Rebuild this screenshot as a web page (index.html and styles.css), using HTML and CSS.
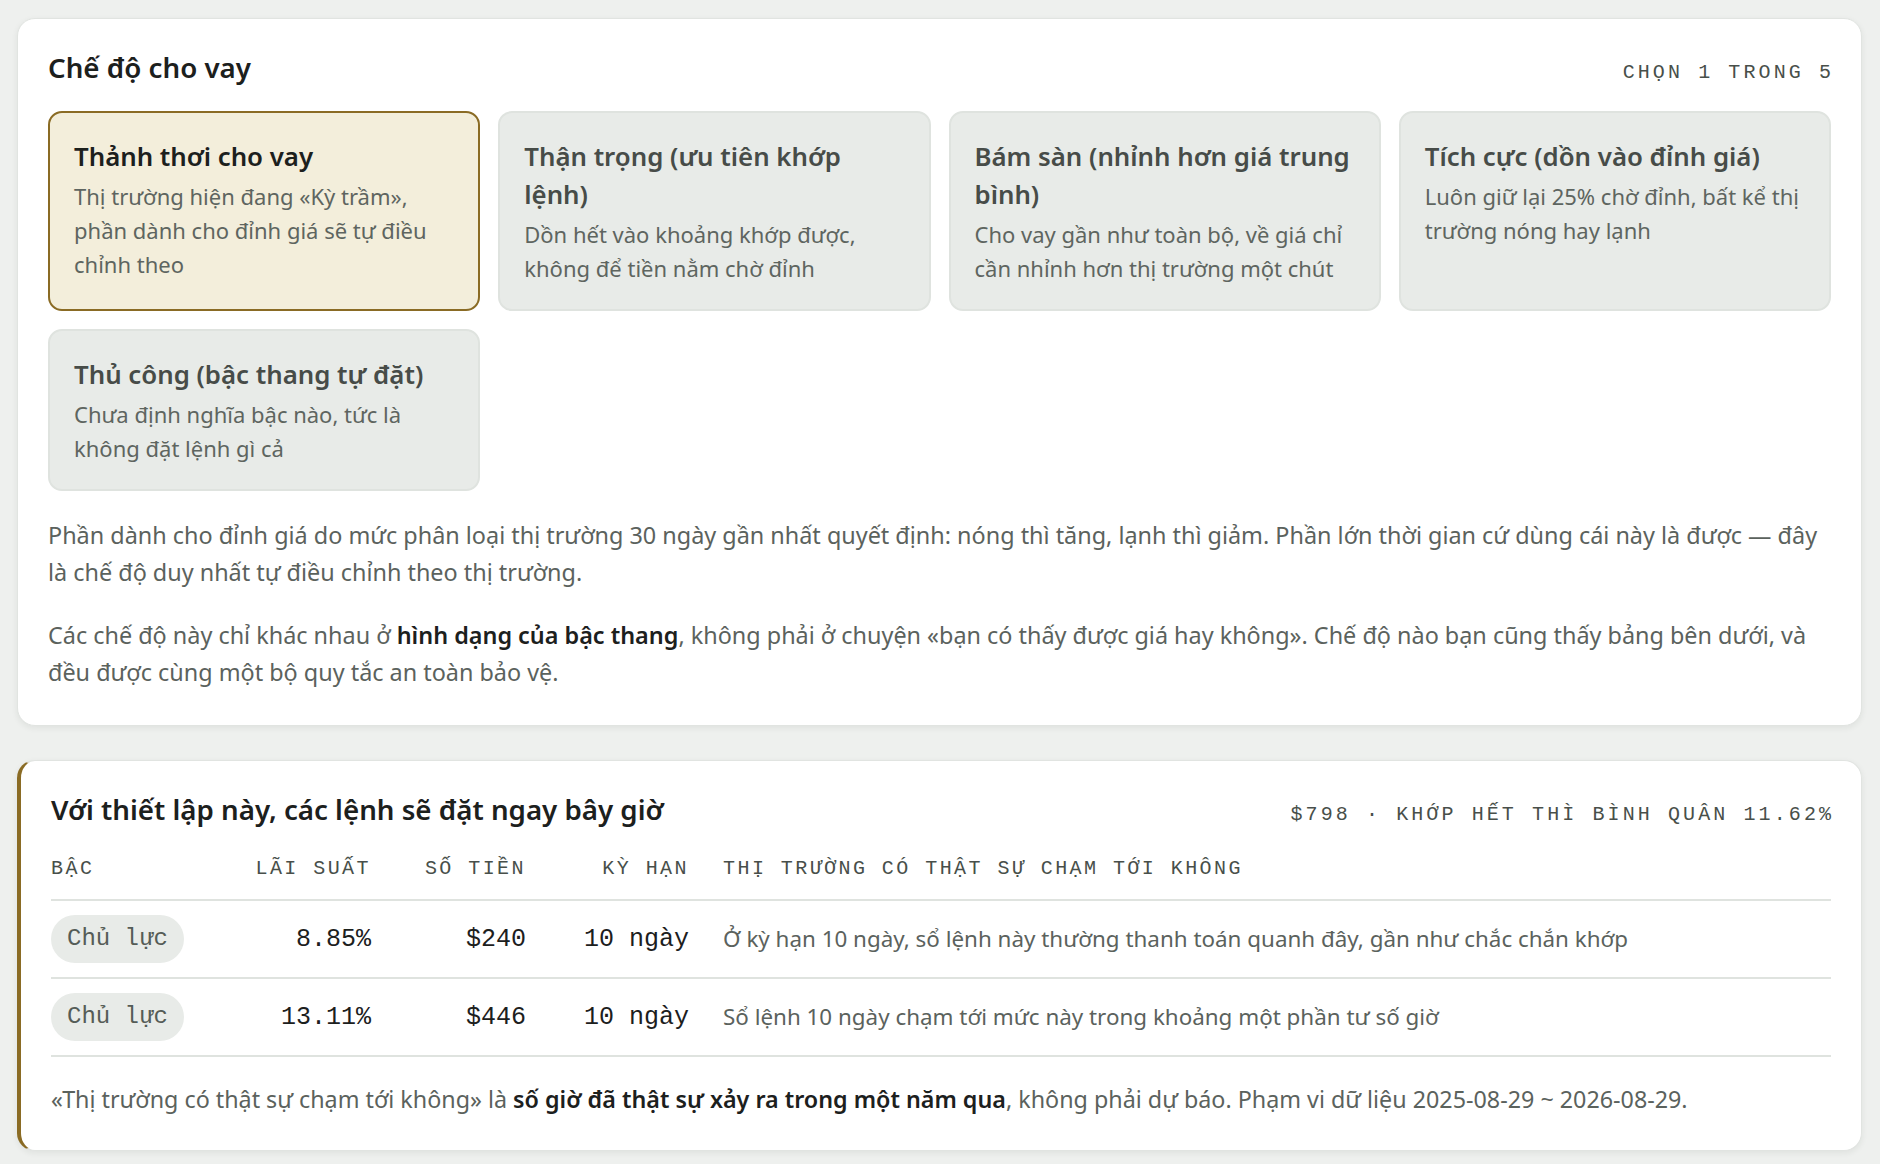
FILE: index.html
```html
<!DOCTYPE html>
<html lang="vi">
<head>
    <meta charset="UTF-8">
    <meta name="viewport" content="width=device-width, initial-scale=1.0">
    <title>Chế độ cho vay</title>
    <link rel="stylesheet" href="styles.css">
</head>
<body>
    <main class="page">
        <!-- Chọn chế độ -->
        <section class="panel">
            <header class="panel-head">
                <h2 class="panel-title">Chế độ cho vay</h2>
                <span class="eyebrow">CHỌN 1 TRONG 5</span>
            </header>

            <div class="modes">
                <div class="mode is-active">
                    <h3 class="mode-title">Thảnh thơi cho vay</h3>
                    <p class="mode-desc">Thị trường hiện đang «Kỳ trầm», phần dành cho đỉnh giá sẽ tự điều chỉnh theo</p>
                </div>
                <div class="mode">
                    <h3 class="mode-title">Thận trọng (ưu tiên khớp lệnh)</h3>
                    <p class="mode-desc">Dồn hết vào khoảng khớp được, không để tiền nằm chờ đỉnh</p>
                </div>
                <div class="mode">
                    <h3 class="mode-title">Bám sàn (nhỉnh hơn giá trung bình)</h3>
                    <p class="mode-desc">Cho vay gần như toàn bộ, về giá chỉ cần nhỉnh hơn thị trường một chút</p>
                </div>
                <div class="mode">
                    <h3 class="mode-title">Tích cực (dồn vào đỉnh giá)</h3>
                    <p class="mode-desc">Luôn giữ lại 25% chờ đỉnh, bất kể thị trường nóng hay lạnh</p>
                </div>
                <div class="mode">
                    <h3 class="mode-title">Thủ công (bậc thang tự đặt)</h3>
                    <p class="mode-desc">Chưa định nghĩa bậc nào, tức là không đặt lệnh gì cả</p>
                </div>
            </div>

            <p class="note">Phần dành cho đỉnh giá do mức phân loại thị trường 30 ngày gần nhất quyết định: nóng thì tăng, lạnh thì giảm. Phần lớn thời gian cứ dùng cái này là được — đây là chế độ duy nhất tự điều chỉnh theo thị trường.</p>
            <p class="note">Các chế độ này chỉ khác nhau ở <strong>hình dạng của bậc thang</strong>, không phải ở chuyện «bạn có thấy được giá hay không». Chế độ nào bạn cũng thấy bảng bên dưới, và đều được cùng một bộ quy tắc an toàn bảo vệ.</p>
        </section>

        <!-- Xem trước các lệnh -->
        <section class="panel panel-preview">
            <header class="panel-head">
                <h2 class="panel-title">Với thiết lập này, các lệnh sẽ đặt ngay bây giờ</h2>
                <span class="eyebrow">$798 · KHỚP HẾT THÌ BÌNH QUÂN 11.62%</span>
            </header>

            <div class="ladder">
                <div class="ladder-row ladder-head">
                    <span>BẬC</span>
                    <span class="right">LÃI SUẤT</span>
                    <span class="right">SỐ TIỀN</span>
                    <span class="right">KỲ HẠN</span>
                    <span>THỊ TRƯỜNG CÓ THẬT SỰ CHẠM TỚI KHÔNG</span>
                </div>
                <div class="ladder-row">
                    <span class="tier">Chủ lực</span>
                    <span class="num">8.85%</span>
                    <span class="num">$240</span>
                    <span class="num">10 ngày</span>
                    <span class="hit">Ở kỳ hạn 10 ngày, sổ lệnh này thường thanh toán quanh đây, gần như chắc chắn khớp</span>
                </div>
                <div class="ladder-row">
                    <span class="tier">Chủ lực</span>
                    <span class="num">13.11%</span>
                    <span class="num">$446</span>
                    <span class="num">10 ngày</span>
                    <span class="hit">Sổ lệnh 10 ngày chạm tới mức này trong khoảng một phần tư số giờ</span>
                </div>
            </div>

            <p class="footnote">«Thị trường có thật sự chạm tới không» là <strong>số giờ đã thật sự xảy ra trong một năm qua</strong>, không phải dự báo. Phạm vi dữ liệu 2025-08-29 ~ 2026-08-29.</p>
        </section>
    </main>
</body>
</html>
```

FILE: styles.css
```css
:root {
    --page: #eef0ee;
    --surface: #ffffff;
    --border: #e1e4e1;
    --line: #dfe3df;
    --chip: #e8ebe8;
    --ink: #1c201d;
    --ink-soft: #474c48;
    --muted: #5b625d;
    --label: #484f4a;
    --gold: #8a6b24;
    --cream: #f3eedb;
    --sans: "Noto Sans", sans-serif;
    --mono: "Liberation Mono", "DejaVu Sans Mono", monospace;
}

body {
    margin: 0;
    padding: 18px 18px 18px 17px;
    background: var(--page);
    font-family: var(--sans);
    color: var(--muted);
}

.panel {
    background: var(--surface);
    border: 1px solid var(--border);
    border-radius: 18px;
    padding: 30px 30px 34px;
    box-shadow: 0 2px 6px rgba(30, 40, 30, 0.07);
}

.panel + .panel {
    margin-top: 34px;
}

.panel-preview {
    border-left: 4px solid var(--gold);
    padding-bottom: 32px;
}

.panel-head {
    display: flex;
    justify-content: space-between;
    align-items: baseline;
    margin-bottom: 26px;
}

.panel-title {
    margin: 0;
    font-size: 27.7px;
    line-height: 36px;
    font-weight: 600;
    color: var(--ink);
}

.eyebrow {
    font-family: var(--mono);
    font-size: 20px;
    letter-spacing: 0.155em;
    margin-right: -0.155em;
    color: var(--label);
}

/* thẻ chế độ */
.modes {
    display: grid;
    grid-template-columns: repeat(4, 1fr);
    gap: 18px;
}

.mode {
    background: var(--chip);
    border: 2px solid var(--line);
    border-radius: 14px;
    padding: 24px 23px 24px 24px;
}

.mode.is-active {
    background: var(--cream);
    border-color: var(--gold);
}

.mode-title {
    margin: 0 0 4px;
    font-size: 25.8px;
    line-height: 38px;
    font-weight: 600;
    color: var(--ink-soft);
}

.is-active .mode-title {
    color: var(--ink);
}

.mode-desc {
    margin: 0;
    font-size: 22px;
    line-height: 34px;
    color: #5e6560;
}

.note {
    margin: 26px 0 0;
    font-size: 23.4px;
    line-height: 37px;
}

.note strong,
.footnote strong {
    font-weight: 600;
    color: var(--ink);
}

/* bảng bậc thang */
.ladder-row {
    display: grid;
    grid-template-columns: 150px 136px 121px 129px 1fr;
    column-gap: 34px;
    align-items: center;
    padding: 14px 0;
    border-bottom: 2px solid var(--line);
}

.ladder-head {
    padding: 4px 0 19px;
    font-family: var(--mono);
    font-size: 20px;
    letter-spacing: 0.122em;
    color: var(--label);
}

.right {
    text-align: right;
}

.num {
    text-align: right;
    font-family: var(--mono);
    font-size: 25px;
    color: var(--ink);
}

.tier {
    justify-self: start;
    height: 48px;
    line-height: 48px;
    padding: 0 16px;
    border-radius: 24px;
    background: var(--chip);
    font-family: var(--mono);
    font-size: 24px;
    color: #555c57;
}

.hit {
    font-size: 22.4px;
    line-height: 32px;
}

.footnote {
    margin: 24px 0 0;
    font-size: 23.3px;
    line-height: 37px;
}
```
